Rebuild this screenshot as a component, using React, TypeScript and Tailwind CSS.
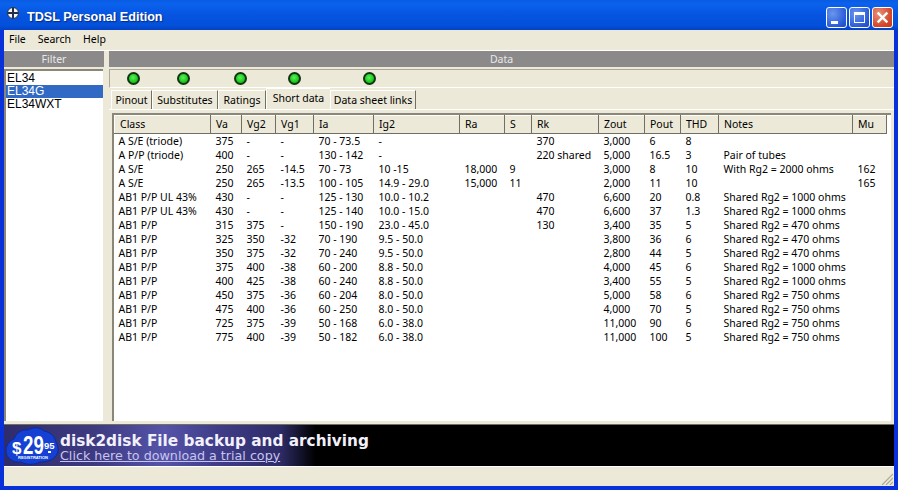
import React from "react";

const columns = [
  { name: "Class", width: "w-[96px]" },
  { name: "Va", width: "w-[31px]" },
  { name: "Vg2", width: "w-[34px]" },
  { name: "Vg1", width: "w-[38px]" },
  { name: "Ia", width: "w-[60px]" },
  { name: "Ig2", width: "w-[86px]" },
  { name: "Ra", width: "w-[45px]" },
  { name: "S", width: "w-[27px]" },
  { name: "Rk", width: "w-[67px]" },
  { name: "Zout", width: "w-[46px]" },
  { name: "Pout", width: "w-[36px]" },
  { name: "THD", width: "w-[38px]" },
  { name: "Notes", width: "w-[134px]" },
  { name: "Mu", width: "w-[34px]" },
];

const rows = [
  ["A S/E (triode)", "375", "-", "-", "70 - 73.5", "-", "", "", "370", "3,000", "6", "8", "", ""],
  ["A P/P (triode)", "400", "-", "-", "130 - 142", "-", "", "", "220 shared", "5,000", "16.5", "3", "Pair of tubes", ""],
  ["A S/E", "250", "265", "-14.5", "70 - 73", "10 -15", "18,000", "9", "", "3,000", "8", "10", "With Rg2 = 2000 ohms", "162"],
  ["A S/E", "250", "265", "-13.5", "100 - 105", "14.9 - 29.0", "15,000", "11", "", "2,000", "11", "10", "", "165"],
  ["AB1 P/P UL 43%", "430", "-", "-", "125 - 130", "10.0 - 10.2", "", "", "470", "6,600", "20", "0.8", "Shared Rg2 = 1000 ohms", ""],
  ["AB1 P/P UL 43%", "430", "-", "-", "125 - 140", "10.0 - 15.0", "", "", "470", "6,600", "37", "1.3", "Shared Rg2 = 1000 ohms", ""],
  ["AB1 P/P", "315", "375", "-", "150 - 190", "23.0 - 45.0", "", "", "130", "3,400", "35", "5", "Shared Rg2 = 470 ohms", ""],
  ["AB1 P/P", "325", "350", "-32", "70 - 190", "9.5 - 50.0", "", "", "", "3,800", "36", "6", "Shared Rg2 = 470 ohms", ""],
  ["AB1 P/P", "350", "375", "-32", "70 - 240", "9.5 - 50.0", "", "", "", "2,800", "44", "5", "Shared Rg2 = 470 ohms", ""],
  ["AB1 P/P", "375", "400", "-38", "60 - 200", "8.8 - 50.0", "", "", "", "4,000", "45", "6", "Shared Rg2 = 1000 ohms", ""],
  ["AB1 P/P", "400", "425", "-38", "60 - 240", "8.8 - 50.0", "", "", "", "3,400", "55", "5", "Shared Rg2 = 1000 ohms", ""],
  ["AB1 P/P", "450", "375", "-36", "60 - 204", "8.0 - 50.0", "", "", "", "5,000", "58", "6", "Shared Rg2 = 750 ohms", ""],
  ["AB1 P/P", "475", "400", "-36", "60 - 250", "8.0 - 50.0", "", "", "", "4,000", "70", "5", "Shared Rg2 = 750 ohms", ""],
  ["AB1 P/P", "725", "375", "-39", "50 - 168", "6.0 - 38.0", "", "", "", "11,000", "90", "6", "Shared Rg2 = 750 ohms", ""],
  ["AB1 P/P", "775", "400", "-39", "50 - 182", "6.0 - 38.0", "", "", "", "11,000", "100", "5", "Shared Rg2 = 750 ohms", ""],
];

const tabs = [
  { name: "Pinout", width: "w-[41px]" },
  { name: "Substitutes", width: "w-[66px]" },
  { name: "Ratings", width: "w-[48px]" },
  { name: "Short data", width: "w-[64px]" },
  { name: "Data sheet links", width: "w-[86px]" },
];
const ledGaps = ["ml-[17px]", "ml-[37px]", "ml-[44px]", "ml-[41px]", "ml-[62px]"];

function Led({ className }: { className: string }) {
  return (
    <span
      className={`h-[13px] w-[13px] rounded-full border-2 border-[#143214] bg-[radial-gradient(circle_at_45%_40%,#5cf05c,#0fc40f_70%)] ${className}`}
    />
  );
}

function CaptionButton({ children, red }: { children: React.ReactNode; red?: boolean }) {
  return (
    <div
      className={`flex h-[21px] w-[21px] items-center justify-center rounded-[3px] border border-white ${
        red
          ? "bg-[radial-gradient(circle_at_30%_30%,#e8917a,#d4472a_65%,#c23a1c)]"
          : "bg-[radial-gradient(circle_at_30%_30%,#6a96ee,#2a5cd8_70%,#1c48c0)]"
      }`}
    >
      {children}
    </div>
  );
}

function PriceBadge() {
  return (
    <div className="relative ml-[1px] h-[38px] w-[54px] shrink-0">
      <svg viewBox="0 0 54 38" className="absolute inset-0 h-full w-full">
        <path
          d="M1 24c0-6 3-10 8-12 2-6 8-10 14-9 5-3 12-3 16 1 6 1 11 5 12 11 3 5 3 11-1 15-4 4-10 5-15 5-6 3-14 3-19 0C8 36 1 31 1 24z"
          fill="#1440d4"
          stroke="#0a2aa0"
        />
      </svg>
      <span className="absolute top-[13px] left-[7px] font-['Liberation_Sans',sans-serif] text-[17px] leading-none font-bold text-white">$</span>
      <span className="absolute top-[7px] left-[18px] origin-left [transform:scaleX(0.72)] font-['Liberation_Sans',sans-serif] text-[26px] leading-[22px] font-bold text-white">29</span>
      <span className="absolute top-[14px] left-[39px] font-['Liberation_Sans',sans-serif] text-[9.5px] leading-none font-bold text-white">95</span>
      <span className="absolute top-[24px] left-[43px] h-[2px] w-[3px] bg-white" />
      <span className="absolute top-[29px] left-[13px] font-['Liberation_Sans',sans-serif] text-[4px] leading-none font-bold text-white">REGISTRATION</span>
    </div>
  );
}

export default function App() {
  return (
    <div className="flex h-[490px] w-[898px] flex-col overflow-hidden bg-[#0831d9] font-['Noto_Sans','Liberation_Sans',sans-serif] text-[10.5px] text-black">
      {/* title bar */}
      <div className="flex h-[30px] shrink-0 items-center bg-[linear-gradient(to_bottom,#0a5be0,#0a62ee_12%,#0654e0_50%,#0350da_85%,#0342c4)] pt-[4px] pr-[5px] pl-[6px]">
        <svg viewBox="0 0 14 14" className="mb-[8px] h-[14px] w-[14px]">
          <circle cx="7" cy="7" r="5.5" fill="#f4f4f4" stroke="#20304a" />
          <rect x="2" y="6" width="10" height="2" fill="#20304a" />
          <rect x="6" y="2" width="2" height="4" fill="#20304a" />
          <rect x="6" y="8" width="2" height="4" fill="#20304a" />
        </svg>
        <span className="ml-[7px] font-['Liberation_Sans',sans-serif] text-[12.6px] font-bold text-white [text-shadow:1px_1px_1px_#0a2a80]">
          TDSL Personal Edition
        </span>
        <div className="ml-auto flex gap-[2px]">
          <CaptionButton>
            <span className="mt-[10px] mr-[5px] h-[3px] w-[7px] bg-white" />
          </CaptionButton>
          <CaptionButton>
            <span className="h-[11px] w-[11px] border border-t-[3px] border-white" />
          </CaptionButton>
          <CaptionButton red>
            <svg viewBox="0 0 12 12" className="h-[13px] w-[13px]">
              <path d="M1.5 1.5l9 9M10.5 1.5l-9 9" stroke="#fff" strokeWidth="2.2" />
            </svg>
          </CaptionButton>
        </div>
      </div>

      <div className="mx-[4px] mb-[4px] flex min-h-0 flex-1 flex-col bg-[#ece9d8]">
        {/* menu */}
        <div className="flex h-[19px] shrink-0 items-center gap-[12px] pl-[5px]">
          <span>File</span>
          <span>Search</span>
          <span>Help</span>
        </div>
        <div className="h-[2px] shrink-0 border-b border-white" />

        <div className="flex min-h-0 flex-1 gap-[5px]">
          {/* filter */}
          <div className="flex w-[100px] shrink-0 flex-col">
            <div className="flex h-[16px] shrink-0 items-center justify-center bg-[#8b8989] pt-px text-[#e8e8e8]">Filter</div>
            <div className="mt-[2px] mr-[1px] mb-[3px] flex-1 border-t-2 border-l-2 border-[#8a8778] bg-white pt-px font-['Liberation_Sans',sans-serif] text-[12px] leading-[13px]">
              <div className="pl-[1px]">EL34</div>
              <div className="bg-[#316ac5] pl-[1px] text-white">EL34G</div>
              <div className="pl-[1px]">EL34WXT</div>
            </div>
          </div>

          {/* data */}
          <div className="flex min-w-0 flex-1 flex-col">
            <div className="flex h-[16px] shrink-0 items-center justify-center bg-[#8b8989] pt-px text-[#e8e8e8]">Data</div>
            <div className="mt-[2px] flex h-[19px] shrink-0 items-center border-t border-b border-l border-t-[#aca899] border-b-white border-l-[#aca899]">
              {ledGaps.map((gap) => (
                <Led key={gap} className={gap} />
              ))}
            </div>
            <div className="flex h-[21px] shrink-0 items-end pl-[2px]">
              {tabs.map((tab) =>
                tab.name === "Short data" ? (
                  <div key={tab.name} className={`z-10 flex h-[21px] justify-center border-t border-l border-white pt-[2px] ${tab.width}`}>
                    {tab.name}
                  </div>
                ) : (
                  <div
                    key={tab.name}
                    className={`flex h-[19px] items-center justify-center border-t border-r border-l border-t-white border-r-[#716f64] border-l-white pt-[2px] ${tab.width}`}
                  >
                    {tab.name}
                  </div>
                ),
              )}
            </div>
            <div className="flex min-h-0 flex-1 flex-col border-t border-white p-[3px]">
              <div className="min-h-0 flex-1 border-t-2 border-l-2 border-[#8a8778] bg-white">
                <table className="table-fixed border-collapse">
                  <colgroup>
                    {columns.map((c) => (
                      <col key={c.name} className={c.width} />
                    ))}
                  </colgroup>
                  <thead>
                    <tr className="h-[17px] bg-[#ece9d8]">
                      {columns.map((c) => (
                        <th
                          key={c.name}
                          className="border-t border-r border-b border-l border-t-white border-r-[#716f64] border-b-[#716f64] border-l-white pt-px pl-[5px] text-left font-normal whitespace-nowrap"
                        >
                          {c.name}
                        </th>
                      ))}
                    </tr>
                    <tr className="h-[1px]" />
                  </thead>
                  <tbody>
                    {rows.map((row, i) => (
                      <tr key={i} className="h-[14px] leading-[14px]">
                        {row.map((cell, j) => (
                          <td key={j} className={`overflow-hidden whitespace-nowrap ${j === 0 ? "pl-[4px]" : "pl-[5px]"}`}>
                            {cell}
                          </td>
                        ))}
                      </tr>
                    ))}
                  </tbody>
                </table>
              </div>
            </div>
          </div>
        </div>

        {/* banner */}
        <div className="flex h-[42px] shrink-0 items-center gap-[1px] border-t border-[#716f64] bg-[linear-gradient(to_right,#2f2c6c,#3d3a80_10%,#5453a8_18%,#3f3d88_24%,#2e2c68_31%,#000_35%)] font-['DejaVu_Sans',sans-serif]">
          <PriceBadge />
          <div className="mt-[4px] flex flex-col">
            <span className="text-[15.3px] leading-[15px] font-bold text-[#f2f0fa]">disk2disk File backup and archiving</span>
            <span className="text-[12.7px] leading-[13px] text-[#c8c4f0] underline">Click here to download a trial copy</span>
          </div>
        </div>

        {/* status bar */}
        <div className="relative h-[20px] shrink-0 border-t border-white">
          <svg viewBox="0 0 12 12" className="absolute right-[1px] bottom-[1px] h-[12px] w-[12px]">
            <path d="M1 12L12 1M5 12l7-7M9 12l3-3" stroke="#aca899" strokeWidth="1.2" />
          </svg>
        </div>
      </div>
    </div>
  );
}
